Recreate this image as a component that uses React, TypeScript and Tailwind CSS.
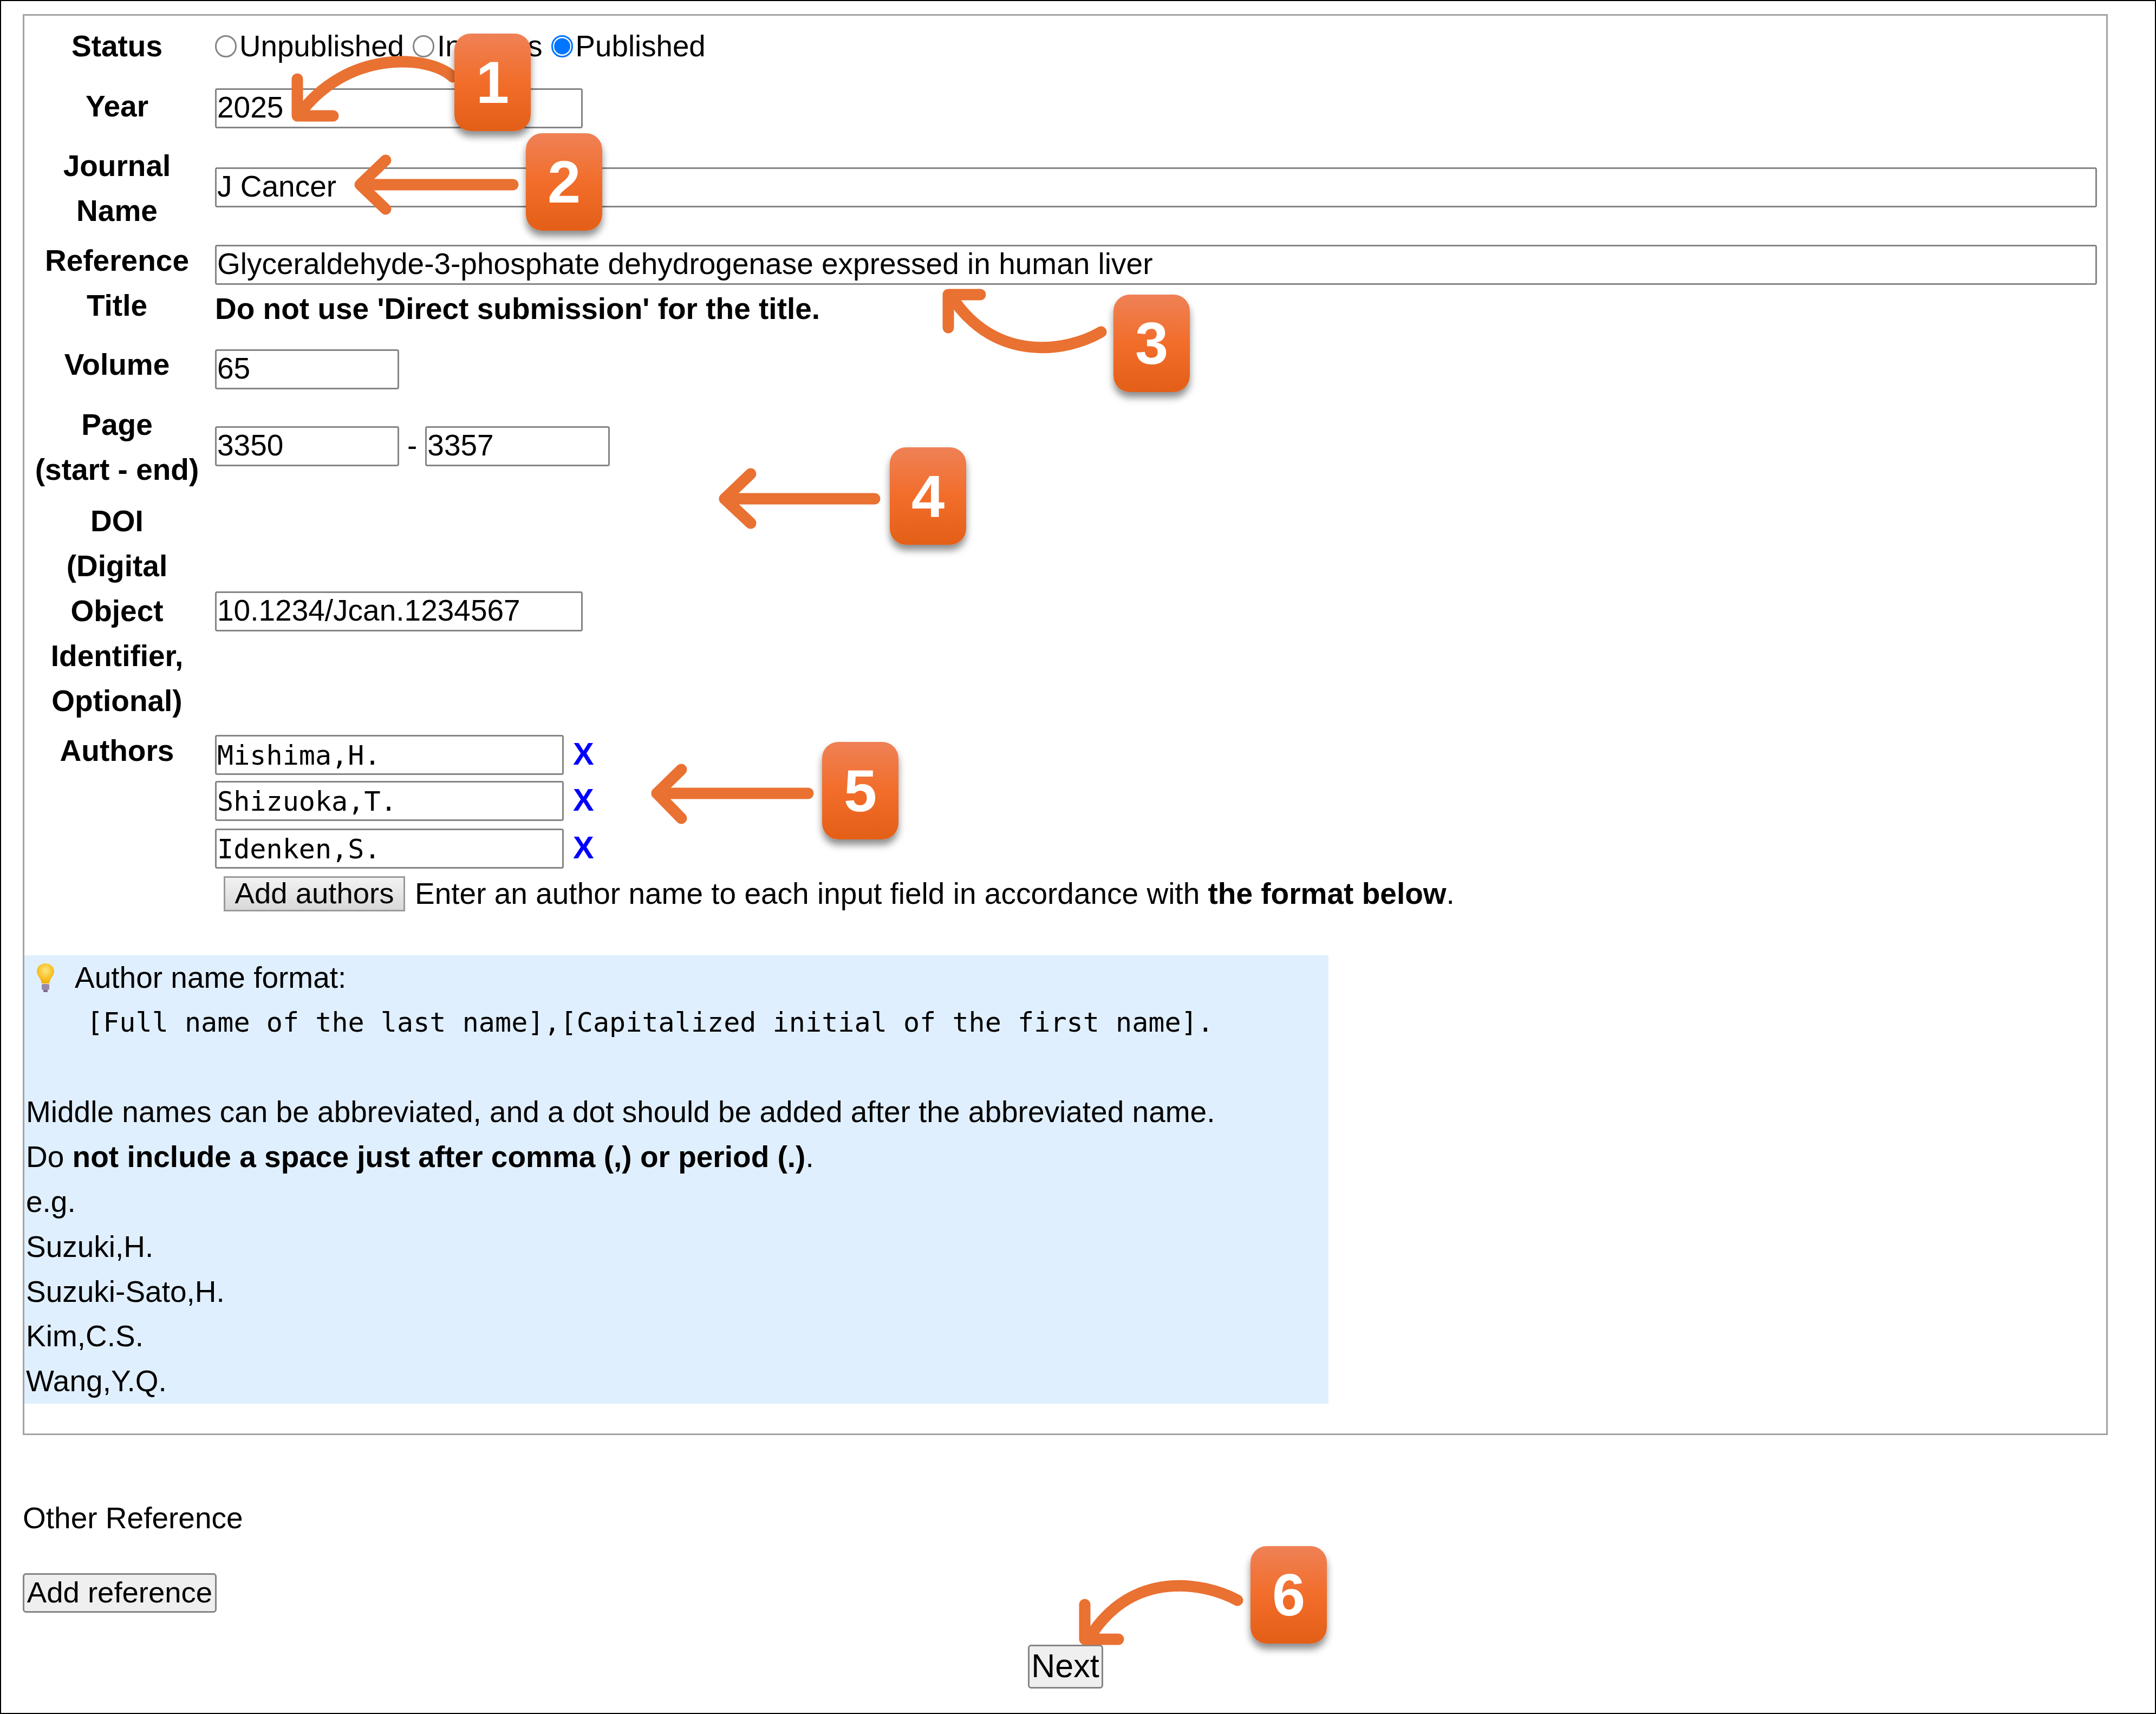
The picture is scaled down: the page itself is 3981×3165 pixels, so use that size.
import type { ReactNode } from "react"

const inputCls = "block h-[74px] border-[3px] border-[#858585] rounded-[4px] bg-white pl-[1px] pr-[3px] text-black outline-none"
const monoCls = "font-['DejaVu_Sans_Mono',monospace] text-[50.1px]"

function Row({ label, className, children }: { label: ReactNode; className: string; children: ReactNode }) {
  return (
    <div className={"flex " + className}>
      <div className="w-[342px] shrink-0 text-center font-bold">{label}</div>
      <div className="ml-[10px] flex-1">{children}</div>
    </div>
  )
}

function TextInput({ value, className }: { value: string; className: string }) {
  return <input readOnly value={value} className={inputCls + " pb-[3px] " + className} />
}

function Radio({ checked, text }: { checked?: boolean; text: string }) {
  return (
    <label className="flex items-center">
      <input
        type="radio"
        name="status"
        defaultChecked={checked}
        className="m-0 h-[41px] w-[40px] appearance-none rounded-full border-[3px] border-[#858585] bg-white checked:border-[#0075ff] checked:bg-[radial-gradient(circle,#0075ff_58%,#ffffff_64%)]"
      />
      <span className="ml-[5px] text-[54.7px]">{text}</span>
    </label>
  )
}

function AuthorInput({ value, className }: { value: string; className: string }) {
  return (
    <div className={"flex items-center " + className}>
      <input readOnly value={value} className={inputCls + " w-[644px] " + monoCls} />
      <span className="ml-[17px] pb-[4px] text-[58px] font-bold leading-none text-[#0000ff]">X</span>
    </div>
  )
}

function Badge({ n, className }: { n: number; className: string }) {
  return (
    <div
      className={
        "absolute flex h-[180px] w-[141px] items-center justify-center rounded-[30px] bg-[linear-gradient(180deg,#ef8156_0%,#f26d2a_50%,#e35f17_100%)] text-[110px] font-bold leading-none text-white shadow-[0_10px_14px_rgba(0,0,0,0.45)] " +
        className
      }
    >
      {n}
    </div>
  )
}

function Arrows() {
  return (
    <svg className="absolute left-0 top-0" width="3981" height="3165" fill="none" stroke="#e97132" strokeLinecap="round" strokeLinejoin="round">
      <g strokeWidth="21">
        <path d="M836 142C790 100 640 92 552 212" />
        <path d="M549 146L549 214L615 214" />
        <path d="M947 341L668 341" />
        <path d="M712 296L665 341L712 386" />
        <path d="M2033 613C1970 650 1840 670 1760 552" />
        <path d="M1751 605L1751 544L1810 544" />
        <path d="M1615 921L1338 921" />
        <path d="M1386 875L1338 921L1386 966" />
        <path d="M1492 1465L1213 1465" />
        <path d="M1258 1421L1213 1465L1258 1511" />
        <path d="M2285 2955C2220 2920 2090 2900 2013 3022" />
        <path d="M2003 2963L2003 3027L2065 3027" />
      </g>
    </svg>
  )
}

function Bulb() {
  return (
    <svg width="38" height="54" viewBox="0 0 38 54" className="ml-[17px] shrink-0">
      <defs>
        <radialGradient id="bulb" cx="50%" cy="35%" r="60%">
          <stop offset="0%" stopColor="#ffe680" />
          <stop offset="100%" stopColor="#f5b000" />
        </radialGradient>
      </defs>
      <path d="M19 1C9 1 3 8 3 16C3 24 11 28 12 38L26 38C27 28 35 24 35 16C35 8 29 1 19 1Z" fill="url(#bulb)" />
      <rect x="12" y="39" width="14" height="11" rx="2" fill="#9a8aa8" />
      <rect x="15" y="50" width="8" height="4" rx="1" fill="#7a6a8a" />
    </svg>
  )
}

export default function App() {
  return (
    <div className="relative h-[3165px] w-[3981px] overflow-hidden bg-white font-['Liberation_Sans',Arial,sans-serif] text-[55px] leading-[83px] text-black shadow-[inset_0_0_0_2px_#000]">
      <div className="ml-[42px] w-[3850px] pt-[26px]">
        <div className="h-[2624px] border-[3px] border-[#a3a3a3] pt-[15px]">
          <Row label="Status" className="h-[84px]">
            <div className="flex gap-[16px]">
              <Radio text="Unpublished" />
              <Radio text="In press" />
              <Radio checked text="Published" />
            </div>
          </Row>

          <Row label="Year" className="mt-[27px] h-[84px]">
            <TextInput value="2025" className="mt-[8px] w-[679px]" />
          </Row>

          <Row label={<>Journal<br />Name</>} className="mt-[26px] h-[166px]">
            <TextInput value="J Cancer" className="mt-[44px] w-[3475px]" />
          </Row>

          <Row label={<>Reference<br />Title</>} className="mt-[9px] h-[165px]">
            <TextInput value="Glyceraldehyde-3-phosphate dehydrogenase expressed in human liver" className="mt-[12px] w-[3475px]" />
            <div className="mt-[3px] font-bold">Do not use 'Direct submission' for the title.</div>
          </Row>

          <Row label="Volume" className="mt-[27px] h-[84px]">
            <TextInput value="65" className="mt-[13px] w-[340px]" />
          </Row>

          <Row label={<>Page<br />(start - end)</>} className="mt-[27px] h-[166px]">
            <div className="mt-[39px] flex items-center">
              <TextInput value="3350" className="w-[340px]" />
              <span className="mx-[15px]">-</span>
              <TextInput value="3357" className="w-[341px]" />
            </div>
          </Row>

          <Row label={<>DOI<br />(Digital<br />Object<br />Identifier,<br />Optional)</>} className="mt-[12px] h-[415px]">
            <TextInput value="10.1234/Jcan.1234567" className="mt-[171px] w-[679px]" />
          </Row>

          <Row label="Authors" className="mt-[9px]">
            <AuthorInput value="Mishima,H." className="mt-[12px]" />
            <AuthorInput value="Shizuoka,T." className="mt-[11px]" />
            <AuthorInput value="Idenken,S." className="mt-[14px]" />
            <div className="mt-[5px] flex items-center">
              <button className="ml-[16px] h-[65px] w-[335px] border-[3px] border-[#9a9a9a] bg-[linear-gradient(180deg,#f2f2f2,#d8d8d8)] text-[54.5px] leading-none">Add authors</button>
              <span className="ml-[18px]">Enter an author name to each input field in accordance with <b>the format below</b>.</span>
            </div>
          </Row>

          <div className="mt-[72px] w-[2408px] bg-[#e0effe] px-[3px] leading-[82.8px]">
            <div className="flex items-center">
              <Bulb />
              <span className="ml-[35px]">Author name format:</span>
            </div>
            <div className={"pl-[112px] " + monoCls}>[Full name of the last name],[Capitalized initial of the first name].</div>
            <div className="h-[82.8px]" />
            <div>Middle names can be abbreviated, and a dot should be added after the abbreviated name.</div>
            <div>Do <b>not include a space just after comma (,) or period (.)</b>.</div>
            <div>e.g.</div>
            <div>Suzuki,H.</div>
            <div>Suzuki-Sato,H.</div>
            <div>Kim,C.S.</div>
            <div>Wang,Y.Q.</div>
          </div>
        </div>

        <div className="mt-[112px]">Other Reference</div>
        <button className="mt-[60px] block h-[73px] w-[358px] rounded-[6px] border-[3px] border-[#858585] bg-[#efefef] text-[54.5px] leading-none">Add reference</button>
        <div className="mt-[59px] flex justify-center">
          <button className="h-[81px] w-[139px] rounded-[6px] border-[3px] border-[#858585] bg-[#efefef] px-0 pb-[3px] text-[61px] leading-none">Next</button>
        </div>
      </div>

      <Arrows />
      <Badge n={1} className="left-[839px] top-[62px]" />
      <Badge n={2} className="left-[971px] top-[246px]" />
      <Badge n={3} className="left-[2056px] top-[544px]" />
      <Badge n={4} className="left-[1643px] top-[826px]" />
      <Badge n={5} className="left-[1518px] top-[1370px]" />
      <Badge n={6} className="left-[2309px] top-[2855px]" />
    </div>
  )
}
